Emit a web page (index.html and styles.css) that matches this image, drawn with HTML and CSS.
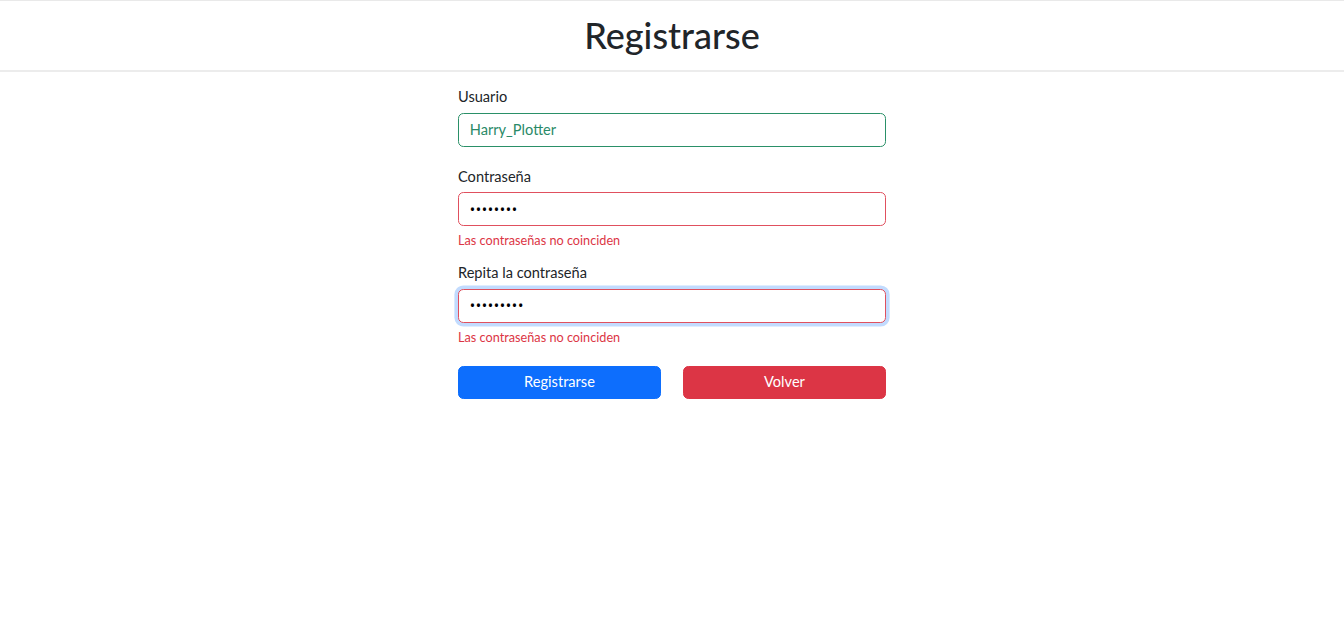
FILE: index.html
```html
<!DOCTYPE html>
<html lang="es">
<head>
<meta charset="utf-8">
<title>Registrarse</title>
<link rel="stylesheet" href="styles.css">
</head>
<body>
<header class="header">
  <h1 class="title">Registrarse</h1>
</header>
<main class="page">
  <form class="form">
    <div class="group">
      <label class="label" for="user">Usuario</label>
      <input class="input is-valid" id="user" type="text" value="Harry_Plotter">
    </div>
    <div class="group">
      <label class="label" for="pass">Contraseña</label>
      <input class="input is-invalid" id="pass" type="password" value="12345678">
      <div class="feedback">Las contraseñas no coinciden</div>
    </div>
    <div class="group">
      <label class="label" for="pass2">Repita la contraseña</label>
      <input class="input is-invalid is-focus" id="pass2" type="password" value="123456789">
      <div class="feedback">Las contraseñas no coinciden</div>
    </div>
    <div class="actions">
      <button class="btn btn-primary" type="button">Registrarse</button>
      <button class="btn btn-danger" type="button">Volver</button>
    </div>
  </form>
</main>
</body>
</html>
```
FILE: styles.css
```css
* { box-sizing: border-box; }
html, body { margin: 0; padding: 0; background: #fff; }
body {
  font-family: "Lato", "Noto Sans", sans-serif;
  font-size: 14.6px;
  line-height: 1.5;
  color: #212529;
}
.header {
  border-top: 1px solid #e9e9e9;
  border-bottom: 2px solid #ececec;
  height: 72px;
  display: flex;
  align-items: center;
  justify-content: center;
}
.title {
  margin: 0;
  font-size: 36px;
  font-weight: 500;
  line-height: 1.2;
  color: #212529;
}
.page { display: flex; justify-content: center; }
.form { width: 428px; margin-top: 14px; }
.group { margin-bottom: 19px; }
.label { display: block; margin-bottom: 5px; line-height: 21.6px; }
.input {
  display: block;
  width: 100%;
  height: 34px;
  padding: 0 10.8px;
  font: inherit;
  color: #212529;
  background: #fff;
  border: 1px solid #ced4da;
  border-radius: 5.4px;
  outline: none;
}
.input.is-valid { border-color: #2a9068; color: #2a8a68; }
.input.is-invalid { border-color: #e0505e; }
.input[type="password"] {
  font-family: "Noto Sans", sans-serif;
  font-size: 14.4px;
  letter-spacing: 0.6px;
  color: #000;
}
.input.is-focus { box-shadow: 0 0 0 3.6px rgba(13, 110, 253, 0.25); }
.feedback {
  margin-top: 6px;
  margin-bottom: -5px;
  font-size: 12.7px;
  line-height: 16px;
  color: #dc3545;
}
.actions { display: flex; gap: 22px; margin-top: 26px; }
.btn {
  flex: 1;
  height: 33px;
  border: 1px solid transparent;
  border-radius: 5.4px;
  font: inherit;
  color: #fff;
  cursor: pointer;
}
.btn-primary { background: #0d6efd; border-color: #0d6efd; }
.btn-danger { background: #dc3545; border-color: #dc3545; }
```
